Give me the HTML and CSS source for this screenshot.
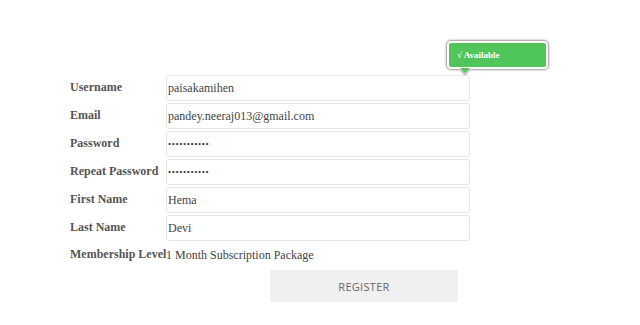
FILE: index.html
```html
<!DOCTYPE html>
<html>
<head>
<meta charset="utf-8">
<link rel="stylesheet" href="styles.css">
</head>
<body>
<div class="page">
  <form class="form">
    <div class="row"><label class="lbl">Username</label><div class="field">paisakamihen</div></div>
    <div class="row"><label class="lbl">Email</label><div class="field">pandey.neeraj013@gmail.com</div></div>
    <div class="row"><label class="lbl">Password</label><div class="field dots">•••••••••••</div></div>
    <div class="row"><label class="lbl">Repeat Password</label><div class="field dots">•••••••••••</div></div>
    <div class="row"><label class="lbl">First Name</label><div class="field">Hema</div></div>
    <div class="row"><label class="lbl">Last Name</label><div class="field">Devi</div></div>
    <div class="row plain"><label class="lbl nowrap">Membership Level</label><div class="value">1 Month Subscription Package</div></div>
    <div class="actions"><button type="button" class="btn">REGISTER</button></div>
  </form>
  <div class="tip">√ Available</div>
</div>
</body>
</html>
```
FILE: styles.css
```css
html, body { margin: 0; padding: 0; background: #fff; }
body { width: 640px; height: 325px; overflow: hidden; font-family: "Liberation Serif", "Times New Roman", serif; }
.page { position: relative; width: 640px; height: 325px; }
.form { padding: 75px 0 0 70px; display: flex; flex-direction: column; gap: 2px; }
.row { display: grid; grid-template-columns: 96px 304px; height: 26px; align-items: center; }
.lbl { font-family: "Liberation Serif", "Times New Roman", serif; font-weight: bold; font-size: 12px; color: #555; align-self: start; padding-top: 5px; }
.nowrap { white-space: nowrap; }
.field { font-family: "Liberation Serif", "Times New Roman", serif; box-sizing: border-box; height: 26px; border: 1px solid #e6e6e6; border-radius: 3px; padding: 0 2px 0 1px; font-size: 12px; color: #444; line-height: 25px; }
.dots { font-size: 9px; letter-spacing: 0.6px; color: #333; line-height: 24px; }
.plain .lbl { padding-top: 4px; }
.value { font-family: "Liberation Serif", "Times New Roman", serif; font-size: 12px; color: #444; align-self: start; padding-top: 5px; }
.actions { padding: 0 0 0 200px; margin-top: -1px; }
.btn { width: 188px; height: 32px; border: none; background: #f0f0f0; color: #666; font-family: "Open Sans", sans-serif; font-size: 11px; letter-spacing: 0.3px; padding: 0; }
.tip { position: absolute; left: 447px; top: 41px; width: 97px; height: 24px; background: #4fc55a; border: 2px solid #fff; border-radius: 4px; box-shadow: 0 0 2px 1px #999; color: #fff; font-family: "Liberation Serif", serif; font-weight: bold; font-size: 9px; line-height: 24px; text-indent: 8px; }
.tip::after { content: ""; position: absolute; left: 11px; bottom: -6px; width: 0; height: 0; border-left: 5px solid transparent; border-right: 5px solid transparent; border-top: 5px solid #4fc55a; }
.tip::before { content: ""; position: absolute; left: 9px; bottom: -9px; width: 0; height: 0; border-left: 7px solid transparent; border-right: 7px solid transparent; border-top: 7px solid #c8c8c8; }
```
